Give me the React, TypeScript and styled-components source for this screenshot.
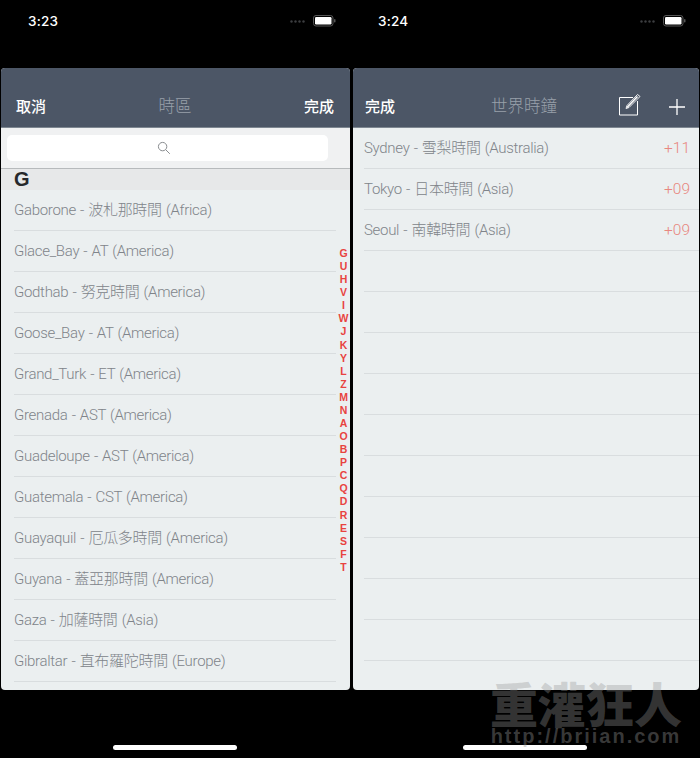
import styled, { createGlobalStyle } from 'styled-components'

const timezones = [
  'Gaborone - 波札那時間 (Africa)',
  'Glace_Bay - AT (America)',
  'Godthab - 努克時間 (America)',
  'Goose_Bay - AT (America)',
  'Grand_Turk - ET (America)',
  'Grenada - AST (America)',
  'Guadeloupe - AST (America)',
  'Guatemala - CST (America)',
  'Guayaquil - 厄瓜多時間 (America)',
  'Guyana - 蓋亞那時間 (America)',
  'Gaza - 加薩時間 (Asia)',
  'Gibraltar - 直布羅陀時間 (Europe)',
]

const clocks = [
  { name: 'Sydney - 雪梨時間 (Australia)', offset: '+11' },
  { name: 'Tokyo - 日本時間 (Asia)', offset: '+09' },
  { name: 'Seoul - 南韓時間 (Asia)', offset: '+09' },
]

const letters = 'GUHVIWJKYLZMNAOBPCQDRESFT'.split('')

function App() {
  return (
    <Page>
      <GlobalStyle />
      <Phone>
        <StatusBar time="3:23" />
        <LeftPanel>
          <NavBar>
            <NavButton>取消</NavButton>
            <NavTitle>時區</NavTitle>
            <NavButton>完成</NavButton>
          </NavBar>
          <SearchBar>
            <SearchInput>
              <svg width="14" height="14" viewBox="0 0 14 14" fill="none" stroke="#8a8d90" strokeWidth="1">
                <circle cx="5.6" cy="5.6" r="4.2" />
                <path d="M8.7 8.7 L12.8 12.8" />
              </svg>
            </SearchInput>
          </SearchBar>
          <SectionHeader>G</SectionHeader>
          {timezones.map((name) => (
            <ZoneRow key={name}>
              <RowText>{name}</RowText>
            </ZoneRow>
          ))}
          <LetterIndex>
            {letters.map((l) => (
              <Letter key={l}>{l}</Letter>
            ))}
          </LetterIndex>
        </LeftPanel>
        <HomeBar />
      </Phone>
      <Phone>
        <StatusBar time="3:24" />
        <RightPanel>
          <ClockNav>
            <NavButton>完成</NavButton>
            <ClockTitle>世界時鐘</ClockTitle>
            <NavIcons>
              <svg width="24" height="24" viewBox="0 0 24 24" fill="none" stroke="#fff">
                <path d="M16 5.5 H2.5 V23 H20.5 V9" strokeWidth="1" />
                <path d="M9 16.5 L10 13.5 L20.5 2.5 L23 4.5 L12 15.5 Z" strokeWidth="0.9" />
                <path d="M10 15.5 L20.5 4.5" strokeWidth="1.4" />
              </svg>
              <svg width="18" height="18" viewBox="0 0 18 18" stroke="#fff" strokeWidth="1.3">
                <path d="M9 1 V17 M1 9 H17" />
              </svg>
            </NavIcons>
          </ClockNav>
          {clocks.map((c) => (
            <ClockRow key={c.name}>
              <RowText>{c.name}</RowText>
              <Offset>{c.offset}</Offset>
            </ClockRow>
          ))}
          {Array.from({ length: 10 }).map((_, i) => (
            <ClockRow key={i} />
          ))}
        </RightPanel>
        <HomeBar />
      </Phone>
      <Watermark>
        <WatermarkTitle>重灌狂人</WatermarkTitle>
        <WatermarkUrl>http://briian.com</WatermarkUrl>
      </Watermark>
    </Page>
  )
}

function StatusBar(props: { time: string }) {
  return (
    <StatusRow>
      <Time>{props.time}</Time>
      <StatusIcons>
        <svg width="16" height="3" viewBox="0 0 16 3" fill="#3c3e40">
          <circle cx="1.5" cy="1.5" r="1.2" />
          <circle cx="5.5" cy="1.5" r="1.2" />
          <circle cx="9.5" cy="1.5" r="1.2" />
          <circle cx="13.5" cy="1.5" r="1.2" />
        </svg>
        <svg width="23" height="12" viewBox="0 0 23 12">
          <rect x="0.5" y="0.5" width="19.5" height="10.5" rx="2.5" fill="none" stroke="#555" />
          <rect x="2" y="2" width="16.5" height="7.5" rx="1.2" fill="#fff" />
          <rect x="21" y="4" width="1.5" height="3.5" rx="0.7" fill="#555" />
        </svg>
      </StatusIcons>
    </StatusRow>
  )
}

const GlobalStyle = createGlobalStyle`
  html, body {
    margin: 0;
    padding: 0;
    background: #000;
  }
`

const Page = styled.div`
  position: relative;
  display: flex;
  width: 700px;
  height: 758px;
  overflow: hidden;
  background: #000;
  font-family: "Roboto", "Noto Sans CJK TC", sans-serif;
`

const Phone = styled.div`
  display: flex;
  flex-direction: column;
  width: 350px;
  height: 758px;
`

const StatusRow = styled.div`
  display: flex;
  align-items: center;
  justify-content: space-between;
  box-sizing: border-box;
  height: 68px;
  padding: 0 14px 26px 28px;
`

const Time = styled.span`
  color: #fff;
  font-family: "Inter", sans-serif;
  font-size: 13.5px;
  font-weight: 500;
  letter-spacing: 0.2px;
`

const StatusIcons = styled.div`
  display: flex;
  align-items: center;
  gap: 7px;
`

const Panel = styled.div`
  position: relative;
  display: flex;
  flex-direction: column;
  height: 622px;
  overflow: hidden;
  background: #ebeff0;
  border-radius: 4px;
`

const LeftPanel = styled(Panel)`
  width: 349px;
  margin-left: 1px;
`

const RightPanel = styled(Panel)`
  width: 346px;
  margin-left: 3px;
`

const NavBar = styled.div`
  display: flex;
  align-items: flex-end;
  justify-content: space-between;
  box-sizing: border-box;
  flex: none;
  height: 60px;
  padding: 0 16px 11px 15px;
  background: #4c5666;
  border-bottom: 1px solid #7e8791;
`

const ClockNav = styled(NavBar)`
  padding: 0 13px 11px 12px;
`

const NavButton = styled.span`
  color: #fff;
  font-size: 15px;
  line-height: 18px;
  font-weight: 500;
`

const NavTitle = styled.span`
  color: #98a0aa;
  font-size: 16.5px;
  line-height: 18px;
  font-weight: 300;
`

const ClockTitle = styled(NavTitle)`
  margin-left: 36px;
`

const NavIcons = styled.div`
  display: flex;
  align-items: flex-end;
  gap: 27px;
  height: 24px;
`

const SearchBar = styled.div`
  flex: none;
  box-sizing: border-box;
  height: 41px;
  padding: 7px 22px 8px 6px;
  background: #f0f1f2;
  border-bottom: 1px solid #b7babc;

  svg {
    margin-right: 8px;
  }
`

const SearchInput = styled.div`
  display: flex;
  align-items: center;
  justify-content: center;
  height: 26px;
  background: #fff;
  border-radius: 5px;
`

const SectionHeader = styled.div`
  flex: none;
  height: 21px;
  padding-left: 13px;
  background: #e7e8e9;
  color: #26282b;
  font-size: 20px;
  line-height: 21px;
  font-weight: 600;
  font-family: "Liberation Sans", sans-serif;
`

const ZoneRow = styled.div`
  display: flex;
  flex: none;
  align-items: center;
  height: 41px;
  box-sizing: border-box;
  margin: 0 14px 0 13px;
  border-bottom: 1px solid #d9dddf;
`

const ClockRow = styled.div`
  display: flex;
  flex: none;
  align-items: center;
  justify-content: space-between;
  height: 41px;
  box-sizing: border-box;
  margin-left: 11px;
  padding-right: 9px;
  border-bottom: 1px solid #d9dddf;
`

const RowText = styled.span`
  color: #80848a;
  font-size: 15px;
  line-height: 20px;
  font-weight: 300;
  letter-spacing: -0.3px;
  word-spacing: 0.8px;
`

const Offset = styled.span`
  color: #e8877f;
  font-size: 15.5px;
  line-height: 20px;
  font-weight: 300;
`

const LetterIndex = styled.div`
  position: absolute;
  top: 179px;
  right: -1px;
  display: flex;
  flex-direction: column;
  align-items: center;
  width: 15px;
`

const Letter = styled.span`
  height: 13.08px;
  color: #e8433f;
  font-size: 10.5px;
  line-height: 13px;
  font-weight: 700;
  font-family: "Liberation Sans", sans-serif;
`

const HomeBar = styled.div`
  width: 124px;
  height: 5px;
  margin: 55px 0 0 113px;
  background: #fff;
  border-radius: 3px;
`

const Watermark = styled.div`
  position: absolute;
  left: 488px;
  top: 677px;
  display: flex;
  flex-direction: column;
  align-items: center;
  width: 196px;
  pointer-events: none;
`

const WatermarkTitle = styled.span`
  color: rgba(150, 150, 150, 0.35);
  font-size: 48px;
  line-height: 50px;
  font-weight: 900;
  font-family: "Noto Sans CJK TC", sans-serif;
`

const WatermarkUrl = styled.span`
  color: rgba(150, 150, 150, 0.38);
  font-size: 20px;
  line-height: 18px;
  font-weight: 700;
  letter-spacing: 2px;
  font-family: "Liberation Sans", sans-serif;
`

export default App
